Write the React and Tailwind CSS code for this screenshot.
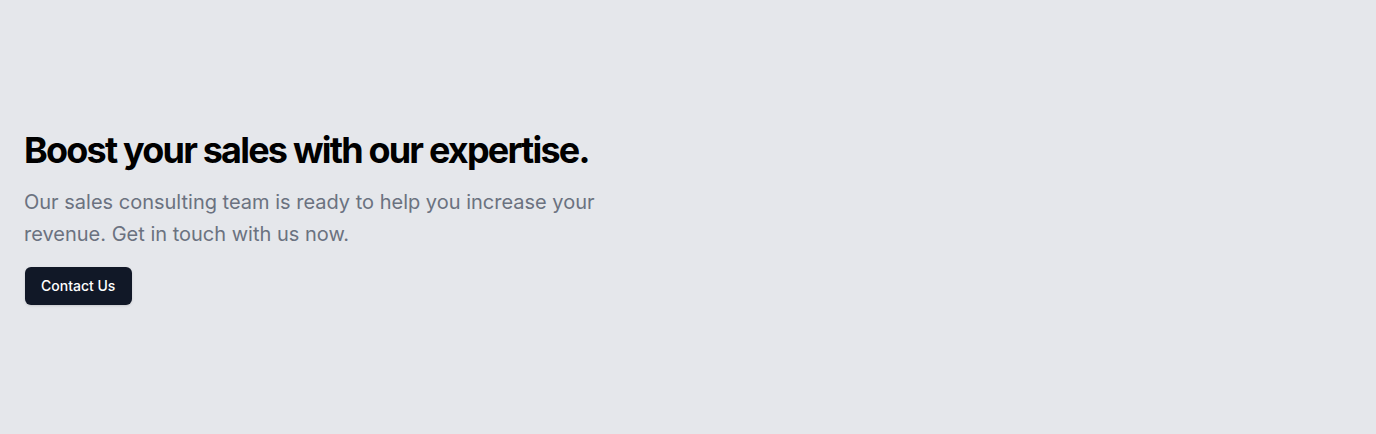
export default function App() {
  return (
    <section className="min-h-screen w-full bg-[#e5e7eb] flex items-center" style={{ fontFamily: 'Inter, "Noto Sans", sans-serif' }}>
      <div className="w-full px-6">
        <div className="flex flex-col gap-4 max-w-[600px]">
          <h1 className="text-4xl leading-10 font-bold tracking-tighter text-black">
            Boost your sales with our expertise.
          </h1>
          <p className="text-xl leading-[1.625] text-[#6b7280]">
            Our sales consulting team is ready to help you increase your revenue. Get in touch with us now.
          </p>
          <div>
            <button className="ml-px h-[38px] pl-4 pr-[17px] rounded-md bg-[#111827] text-white text-sm font-medium shadow">
              Contact Us
            </button>
          </div>
        </div>
      </div>
    </section>
  );
}
